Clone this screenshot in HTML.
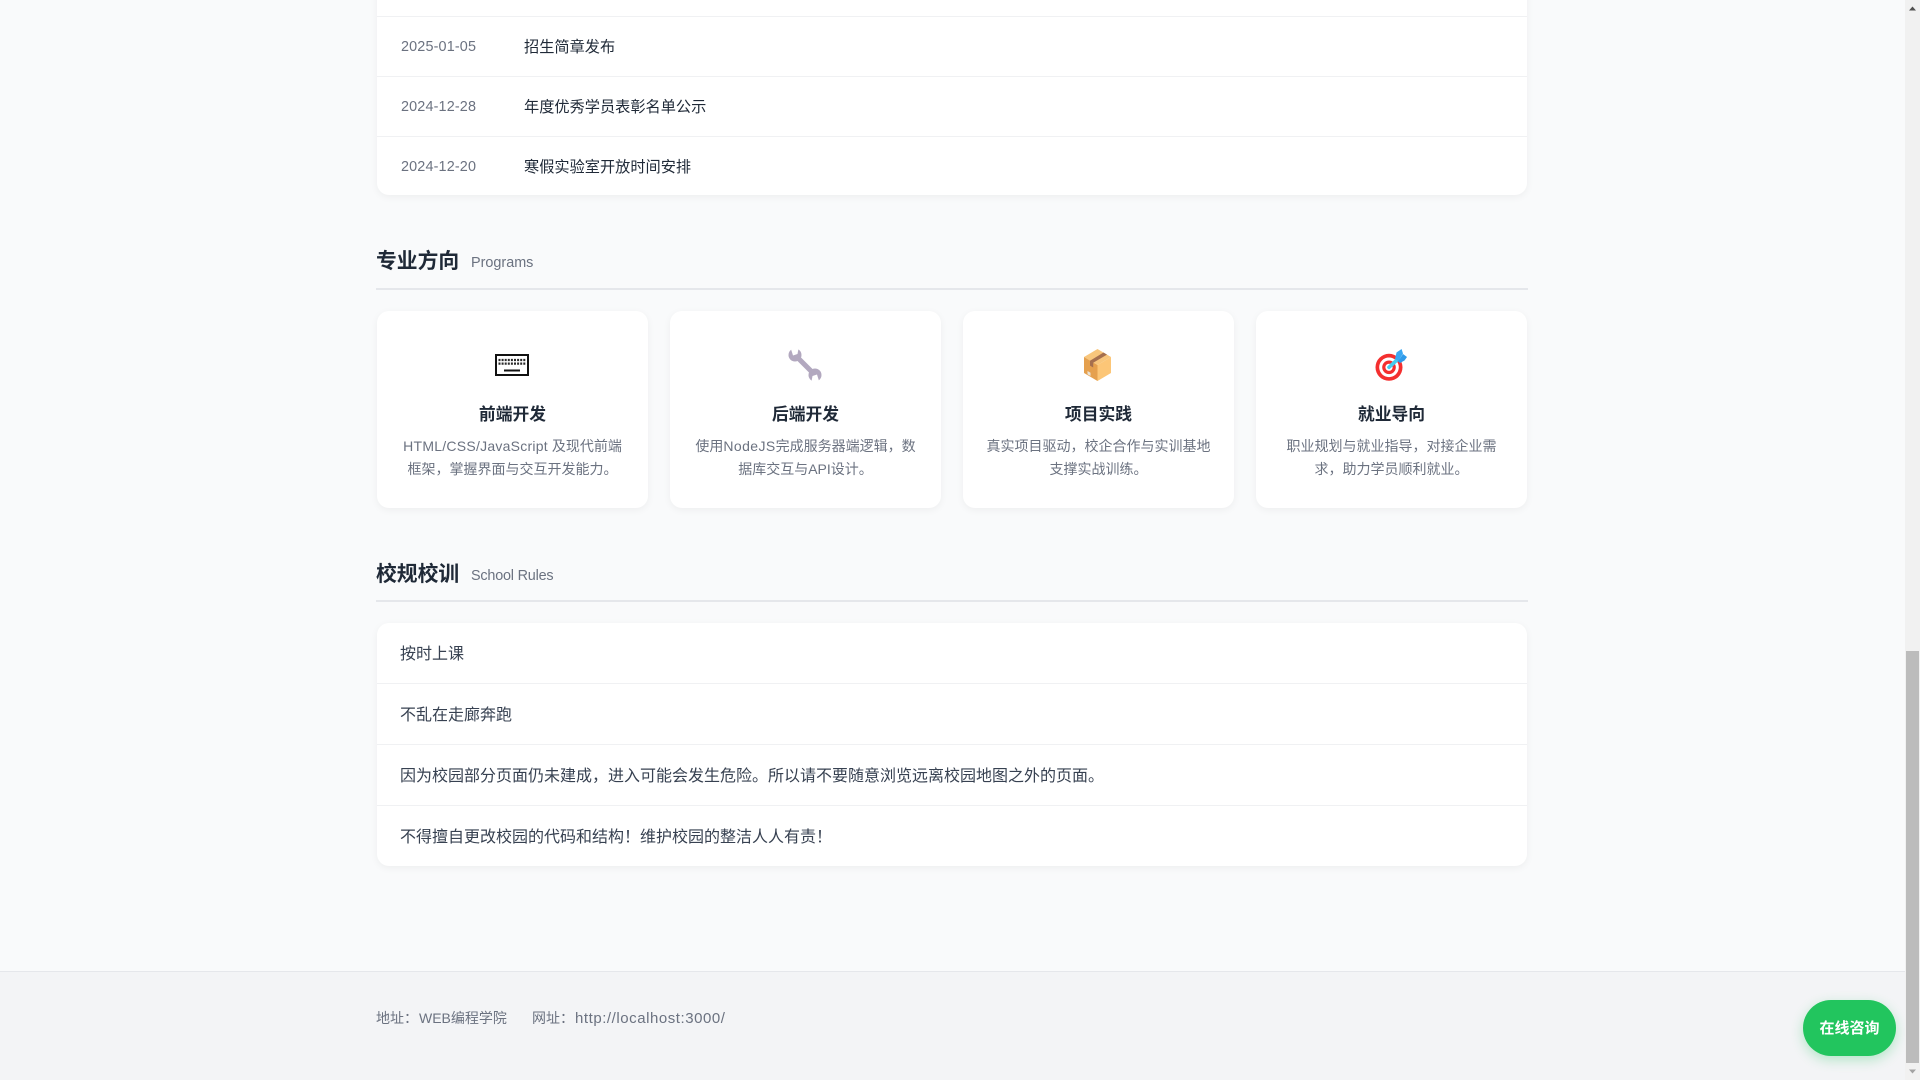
<!DOCTYPE html>
<html lang="zh-CN">
<head>
<meta charset="utf-8">
<title>校园</title>
<style>
*{box-sizing:border-box;margin:0;padding:0}
html,body{width:1920px;height:1080px;overflow:hidden;background:#f9fafb}
body{position:relative;font-family:"Liberation Sans","Noto Sans CJK SC",sans-serif;color:#1f2937}
.abs{position:absolute}
.panel{position:absolute;left:377px;width:1150px;background:#fff;border-radius:12px;box-shadow:0 2px 8px rgba(0,0,0,.05)}
.sep{position:absolute;left:377px;width:1150px;height:1px;background:#f0f1f3}
.date{position:absolute;left:401px;font-size:14.4px;line-height:20px;color:#6b7280;letter-spacing:.15px;white-space:nowrap}
.news{position:absolute;left:524px;font-size:15.2px;line-height:22px;color:#1f2937;white-space:nowrap}
.h2{position:absolute;left:376px;font-size:20.8px;line-height:30px;font-weight:700;color:#1f2937;white-space:nowrap}
.sub{position:absolute;left:471px;font-size:14.4px;line-height:20px;color:#6b7280;white-space:nowrap}
.rule{position:absolute;left:376px;width:1152px;height:2px;background:#e5e7eb}
.card{position:absolute;top:311px;width:271px;height:197px;background:#fff;border-radius:12px;box-shadow:0 2px 8px rgba(0,0,0,.05);text-align:center}
.card h3{position:absolute;left:0;right:0;top:91px;font-size:16.8px;line-height:26px;font-weight:700;color:#1f2937}
.card p{position:absolute;left:0;right:0;top:124px;font-size:14px;line-height:22.8px;color:#6b7280;white-space:nowrap}
.rl{position:absolute;left:400px;font-size:16px;line-height:24px;color:#374151;white-space:nowrap}
.footer{position:absolute;left:0;top:971px;width:1905px;height:109px;background:#f3f4f6;border-top:1px solid #e5e7eb}
.ft{position:absolute;top:1008px;font-size:14px;line-height:20px;color:#6b7280;white-space:nowrap}
.btn{position:absolute;left:1803px;top:1000px;width:93px;height:56px;border-radius:28px;background:#22c55e;box-shadow:0 4px 12px rgba(34,197,94,.3);color:#fff;font-size:15px;font-weight:700;line-height:58px;text-align:center;white-space:nowrap}
.track{position:absolute;left:1905px;top:0;width:15px;height:1080px;background:#f1f1f1}
.thumb{position:absolute;left:1905px;top:651px;width:15px;height:412px;background:#bcbcbc;border-left:1px solid #f1f1f1;border-right:1px solid #f1f1f1}
svg{position:absolute;display:block}
</style>
</head>
<body>

<div class="panel" style="top:-20px;height:215px"></div>
<div class="sep" style="top:16px"></div>
<div class="sep" style="top:76px"></div>
<div class="sep" style="top:136px"></div>

<div class="date" style="top:37px">2025-01-05</div>
<div class="news" style="top:37px">招生简章发布</div>
<div class="date" style="top:97px">2024-12-28</div>
<div class="news" style="top:97px">年度优秀学员表彰名单公示</div>
<div class="date" style="top:157px">2024-12-20</div>
<div class="news" style="top:157px">寒假实验室开放时间安排</div>

<div class="h2" style="top:247px">专业方向</div>
<div class="sub" style="top:253px">Programs</div>
<div class="rule" style="top:288px"></div>

<div class="card" style="left:377px"><h3>前端开发</h3><p><span style="letter-spacing:.25px">HTML/CSS/JavaScript</span> 及现代前端<br>框架，掌握界面与交互开发能力。</p></div>
<div class="card" style="left:670px"><h3>后端开发</h3><p>使用<span style="letter-spacing:.4px">NodeJS</span>完成服务器端逻辑，数<br>据库交互与API设计。</p></div>
<div class="card" style="left:963px"><h3>项目实践</h3><p>真实项目驱动，校企合作与实训基地<br>支撑实战训练。</p></div>
<div class="card" style="left:1256px"><h3>就业导向</h3><p>职业规划与就业指导，对接企业需<br>求，助力学员顺利就业。</p></div>

<!-- keyboard -->
<svg style="left:492px;top:350px" width="40" height="30" viewBox="0 0 40 30">
  <rect x="4" y="5" width="32" height="20" fill="#fff" stroke="#111" stroke-width="2"/>
  <g stroke="#2a2a2a" stroke-width="2.2" stroke-dasharray="2 1.1">
    <line x1="6.5" y1="10" x2="33.5" y2="10"/>
    <line x1="6.5" y1="13.6" x2="33.5" y2="13.6"/>
  </g>
  <rect x="12" y="19.5" width="16" height="2" fill="#111"/>
</svg>

<!-- wrench -->
<svg style="left:785px;top:343px" width="40" height="44" viewBox="0 0 40 44">
  <path d="M12 14 L28 30" stroke="#b2a8bf" stroke-width="5"/>
  <circle cx="10" cy="12" r="6.5" fill="#b2a8bf"/>
  <circle cx="30" cy="32" r="6.5" fill="#b2a8bf"/>
  <path d="M8 12.5 L12.5 11 L14 3 L5 3 Z" fill="#fff"/>
  <path d="M32 31.5 L27.5 33 L26 41 L35 41 Z" fill="#fff"/>
</svg>

<!-- box -->
<svg style="left:1080px;top:343px" width="36" height="42" viewBox="0 0 36 42">
  <path d="M17.5 6 L31 14 L17.5 22 L4 14 Z" fill="#f8c67c"/>
  <path d="M4 14 L17.5 22 L17.5 38 L4 30 Z" fill="#e5a04e"/>
  <path d="M31 14 L17.5 22 L17.5 38 L31 30 Z" fill="#fcc677"/>
  <path d="M23.5 9.5 L27 11.6 L13.2 19.8 L13.2 24.5 L10 22.6 L10 17.8 Z" fill="#a56f4e"/>
  <path d="M7.5 28 L10.5 29.8 L10.5 33 L7.5 31.2 Z" fill="#e9e4da"/>
</svg>

<!-- target -->
<svg style="left:1370px;top:343px" width="42" height="42" viewBox="0 0 42 42">
  <circle cx="19" cy="24.3" r="13.5" fill="#f42f2f"/>
  <circle cx="19" cy="24.3" r="9.8" fill="#fff"/>
  <circle cx="19" cy="24.3" r="6.8" fill="#f42f2f"/>
  <circle cx="19" cy="24.3" r="3.6" fill="#fff"/>
  <path d="M19 24.3 L28 16" stroke="#45cdf0" stroke-width="3.6" stroke-linecap="round"/>
  <path d="M25 16 L26.5 9.5 L31.6 6 L33 10.5 L28.5 18 Z" fill="#3aa7f2"/>
  <path d="M28 18.5 L33 11 L37 14 L34.5 17.5 L30 20 Z" fill="#2f9bea"/>
</svg>

<div class="h2" style="top:560px">校规校训</div>
<div class="sub" style="top:566px;letter-spacing:-.2px">School Rules</div>
<div class="rule" style="top:600px"></div>

<div class="panel" style="top:623px;height:243px"></div>
<div class="sep" style="top:683px"></div>
<div class="sep" style="top:744px"></div>
<div class="sep" style="top:805px"></div>

<div class="rl" style="top:643px">按时上课</div>
<div class="rl" style="top:704px">不乱在走廊奔跑</div>
<div class="rl" style="top:765px">因为校园部分页面仍未建成，进入可能会发生危险。所以请不要随意浏览远离校园地图之外的页面。</div>
<div class="rl" style="top:826px">不得擅自更改校园的代码和结构！维护校园的整洁人人有责！</div>

<div class="footer"></div>
<div class="ft" style="left:376px">地址：<span style="margin-left:1px">WEB</span>编程学院</div>
<div class="ft" style="left:532px">网址：<span style="margin-left:1px;font-size:15px;letter-spacing:.55px">http://localhost:3000/</span></div>

<div class="btn">在线咨询</div>

<div class="track"></div>
<div class="thumb"></div>
<svg style="left:1905px;top:0" width="15" height="17" viewBox="0 0 15 17"><path d="M4 10.5 L7.5 6.5 L11 10.5 Z" fill="#505050"/></svg>
<svg style="left:1905px;top:1063px" width="15" height="17" viewBox="0 0 15 17"><path d="M4 6.5 L7.5 10.5 L11 6.5 Z" fill="#a3a3a3"/></svg>

</body>
</html>
